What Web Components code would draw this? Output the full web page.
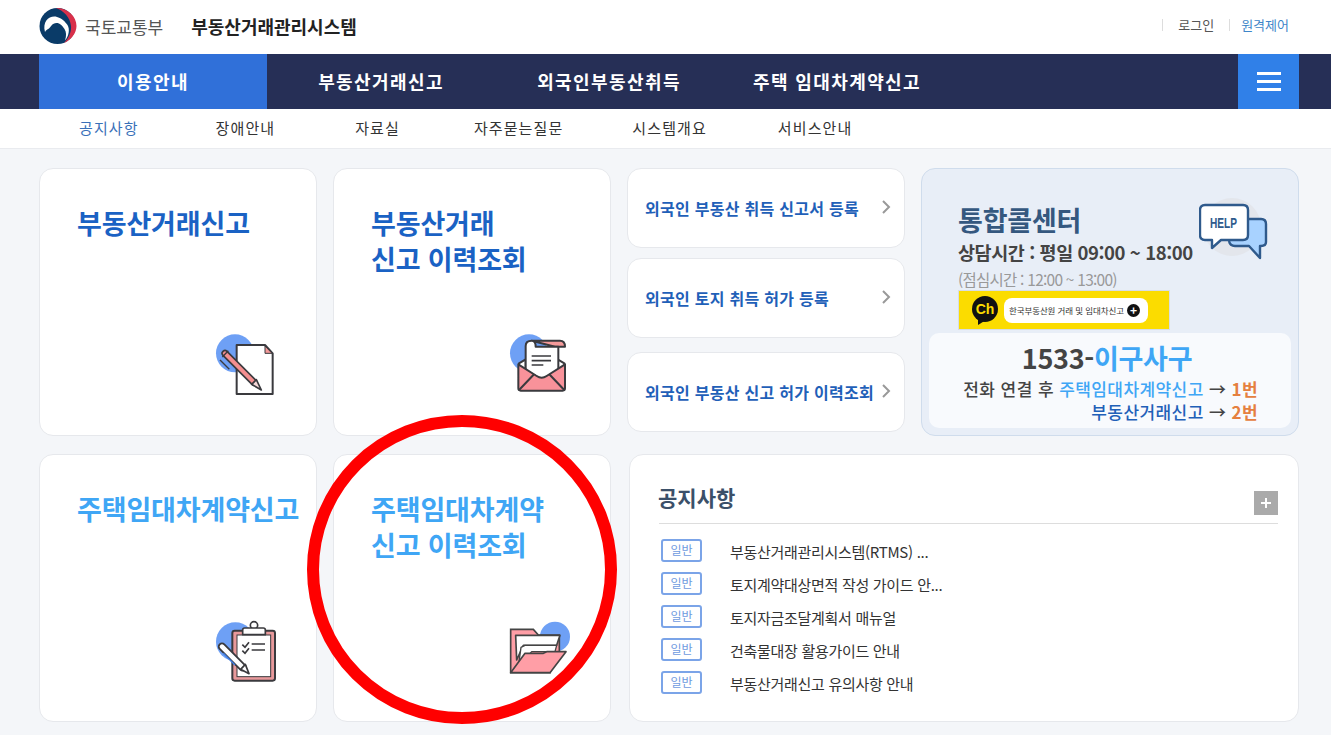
<!DOCTYPE html>
<html lang="ko">
<head>
<meta charset="utf-8">
<title>부동산거래관리시스템</title>
<style>
  html, body { margin: 0; height: 735px; overflow: hidden; }
  body {
    background: #f4f6f9;
    font-family: "Noto Sans CJK KR", "Noto Sans", sans-serif;
    color: #333;
    position: relative;
  }
</style>
</head>
<body>
<site-header></site-header>
<main-nav></main-nav>
<sub-nav></sub-nav>
<dash-board></dash-board>
<ring-mark></ring-mark>

<script>
const headerTpl = document.createElement("template");
headerTpl.innerHTML = `
  <style>
    :host { display: flex; align-items: center; height: 54px; padding: 0 42px 0 39px; background: #fff; }
    svg { width: 38px; height: 36px; margin-top: -2px; }
    .org { margin-left: 8px; font-size: 17px; color: #555; margin-top: -2px; }
    .sys { margin-left: 28px; font-size: 18px; font-weight: 700; color: #222; margin-top: -2px; }
    .util { margin-left: auto; display: flex; align-items: center; font-size: 13px; margin-top: -4px; }
    .util span { line-height: 12px; border-left: 1px solid #ddd; }
    .login { padding-left: 15px; color: #555; }
    .remote { margin-left: 15px; padding-left: 11px; color: #3e86c9; }
  </style>
  <svg viewBox="0 0 38 36" aria-hidden="true">
    <circle cx="18.5" cy="18" r="18" fill="#0a3b68"/>
    <path d="M17 0C28 -.5 37.5 8 37.5 18C37.5 25 32 32 25 35C30 30 32.5 24 32 18C31 9 25 3 17 0Z" fill="#d8304a"/>
    <path d="M6 24C3 13 11 7 18 9C24 10.5 26 14 28.5 17C31 21 30 28 26 32.5C27.5 28 27.5 24 25.5 21C23 17.5 21 15 17.5 15C13 15 12 19 10 20.5C8 21.5 7 22 6 24Z" fill="#fff"/>
  </svg>
  <span class="org">국토교통부</span>
  <span class="sys">부동산거래관리시스템</span>
  <div class="util">
    <span class="login">로그인</span>
    <span class="remote">원격제어</span>
  </div>
`;
class SiteHeader extends HTMLElement {
  constructor() {
    super();
    this.attachShadow({ mode: "open" });
    this.shadowRoot.appendChild(headerTpl.content.cloneNode(true));
  }
}
customElements.define("site-header", SiteHeader);

const navTpl = document.createElement("template");
navTpl.innerHTML = `
  <style>
    :host { display: flex; height: 55px; padding: 0 32px 0 39px; background: #262f56; }
    a { width: 228px; display: flex; align-items: center; justify-content: center; color: #fff; font-size: 18px; font-weight: 700; letter-spacing: 1.4px; padding-bottom: 1px; box-sizing: border-box; }
    a.on { background: #3070d9; }
    button { margin-left: auto; width: 61px; border: 0; padding: 0; background: #3080e8; display: flex; flex-direction: column; align-items: center; justify-content: center; gap: 5px; }
    button i { display: block; width: 24px; height: 3px; background: #fff; }
  </style>
  <a class="on">이용안내</a>
  <a>부동산거래신고</a>
  <a>외국인부동산취득</a>
  <a>주택 임대차계약신고</a>
  <button aria-label="menu"><i></i><i></i><i></i></button>
`;
class MainNav extends HTMLElement {
  constructor() {
    super();
    this.attachShadow({ mode: "open" });
    this.shadowRoot.appendChild(navTpl.content.cloneNode(true));
  }
}
customElements.define("main-nav", MainNav);

const subTpl = document.createElement("template");
subTpl.innerHTML = `
  <style>
    :host { display: flex; align-items: center; height: 39px; padding: 0 0 0 79px; background: #fff; border-bottom: 1px solid #e9ebef; font-size: 15px; letter-spacing: 1.1px; color: #333; }
    span { padding-bottom: 3px; }
    .on { color: #3a70b8; }
  </style>
  <span class="on">공지사항</span>
  <span style="margin-left:77px">장애안내</span>
  <span style="margin-left:80px">자료실</span>
  <span style="margin-left:74px">자주묻는질문</span>
  <span style="margin-left:69px">시스템개요</span>
  <span style="margin-left:71px">서비스안내</span>
`;
class SubNav extends HTMLElement {
  constructor() {
    super();
    this.attachShadow({ mode: "open" });
    this.shadowRoot.appendChild(subTpl.content.cloneNode(true));
  }
}
customElements.define("sub-nav", SubNav);

const tileTpl = document.createElement("template");
tileTpl.innerHTML = `
  <style>
    :host { display: flex; flex-direction: column; box-sizing: border-box; width: 278px; height: 268px; padding: 36px 0 26px 37px; background: #fff; border: 1px solid #e6e8ec; border-radius: 14px; }
    .title { font-size: 27px; font-weight: 700; line-height: 36px; letter-spacing: -0.15px; color: var(--tile-color, #1a62c4); white-space: nowrap; }
    .icon { margin-top: auto; align-self: flex-end; height: 85px; padding-right: 26px; }
    ::slotted(svg) { display: block; width: 90px; height: 85px; }
  </style>
  <div class="title"><slot></slot></div>
  <div class="icon"><slot name="icon"></slot></div>
`;
class TileCard extends HTMLElement {
  constructor() {
    super();
    this.attachShadow({ mode: "open" });
    this.shadowRoot.appendChild(tileTpl.content.cloneNode(true));
  }
}
customElements.define("tile-card", TileCard);

const linkTpl = document.createElement("template");
linkTpl.innerHTML = `
  <style>
    :host { display: flex; align-items: center; box-sizing: border-box; width: 278px; height: 80px; padding: 0 13px 0 17px; background: #fff; border: 1px solid #e6e8ec; border-radius: 14px; font-size: 16px; font-weight: 700; letter-spacing: 0.28px; color: #1f60b8; white-space: nowrap; }
    svg { margin-left: auto; width: 10px; height: 16px; margin-top: -3px; flex: none; }
  </style>
  <slot></slot>
  <svg viewBox="0 0 10 16"><path d="M2 2l6 6-6 6" fill="none" stroke="#999" stroke-width="2"/></svg>
`;
class LinkCard extends HTMLElement {
  constructor() {
    super();
    this.attachShadow({ mode: "open" });
    this.shadowRoot.appendChild(linkTpl.content.cloneNode(true));
  }
}
customElements.define("link-card", LinkCard);

const callTpl = document.createElement("template");
callTpl.innerHTML = `
  <style>
    :host { display: block; position: relative; box-sizing: border-box; width: 378px; height: 268px; padding: 33px 7px 7px 7px; background: #e8eef7; border: 1px solid #cfdcec; border-radius: 14px; }
    .head { padding-left: 29px; }
    .t { font-size: 27px; font-weight: 700; line-height: 36px; letter-spacing: -0.2px; color: #35587f; }
    .h { font-size: 18.5px; font-weight: 700; line-height: 26px; letter-spacing: -0.42px; color: #444; margin-top: 1px; }
    .l { font-size: 15.5px; line-height: 22px; letter-spacing: -0.75px; color: #999; margin-top: 3px; }
    .help { position: absolute; left: 277px; top: 26px; width: 82px; height: 76px; }
    .kakao { display: flex; align-items: center; box-sizing: border-box; width: 210px; height: 38px; margin: 1px 0 0 30px; padding: 0 0 0 11px; background: #fbdc00; box-shadow: 0 0 0 1px rgba(0,0,0,.07); }
    .kakao svg { width: 30px; height: 30px; flex: none; margin-top: 2px; }
    .pill { display: flex; align-items: center; margin-left: 4px; width: 144px; height: 25px; box-sizing: border-box; padding: 0 8px 0 5px; background: #fff; border-radius: 8px; font-size: 8.5px; letter-spacing: -0.1px; color: #333; white-space: nowrap; }
    .plus { margin-left: auto; width: 13px; height: 13px; border-radius: 50%; background: #111; color: #fff; font-size: 12px; line-height: 12px; text-align: center; font-weight: 700; letter-spacing: 0; }
    .box { box-sizing: border-box; height: 95px; margin-top: 4px; padding: 6px 33px 0 0; background: #f8fafd; border-radius: 10px; text-align: right; font-size: 17px; line-height: 23px; font-weight: 500; letter-spacing: 0.42px; color: #444; white-space: nowrap; }
    .num { display: block; text-align: center; margin: 0 -27px 0 0; font-size: 27px; line-height: 38px; font-weight: 700; letter-spacing: -0.3px; }
    .sky { color: #3fa6f5; }
    .blue { color: #1f60b8; }
    .or { color: #e5803f; font-weight: 700; }
  </style>
  <svg class="help" viewBox="0 0 82 76" aria-hidden="true">
    <circle cx="33" cy="32" r="29" fill="#e3e6ec"/>
    <path d="M40 24H62Q67 24 67 29V47Q67 51 62 51H61V63L50 51H36Q31 51 30 46" fill="#a8d2ff" stroke="#2f5a8c" stroke-width="2.4" stroke-linejoin="round"/>
    <path d="M6 10H44Q49 10 49 15V40Q49 45 44 45H22L13 53V45H6Q1 45 1 40V15Q1 10 6 10Z" fill="#fff" stroke="#2f5a8c" stroke-width="2.4" stroke-linejoin="round"/>
    <text x="11" y="33" font-family="'Liberation Sans', sans-serif" font-weight="700" font-size="15" textLength="27" lengthAdjust="spacingAndGlyphs" fill="#2f5a8c">HELP</text>
  </svg>
  <div class="head">
    <div class="t">통합콜센터</div>
    <div class="h">상담시간 : 평일 09:00 ~ 18:00</div>
    <div class="l">(점심시간 : 12:00 ~ 13:00)</div>
  </div>
  <div class="kakao">
    <svg viewBox="0 0 30 30" aria-hidden="true">
      <circle cx="15" cy="13" r="13" fill="#111"/>
      <path d="M8 22L8 29L16 24Z" fill="#111"/>
      <text x="15" y="18" text-anchor="middle" font-family="'Liberation Sans', sans-serif" font-weight="700" font-size="14" fill="#fbdc00">Ch</text>
    </svg>
    <div class="pill">한국부동산원 거래 및 임대차신고<span class="plus">+</span></div>
  </div>
  <div class="box">
    <span class="num">1533-<span class="sky">이구사구</span></span>
    전화 연결 후 <span class="sky">주택임대차계약신고</span> → <span class="or">1번</span><br>
    <span class="blue">부동산거래신고</span> → <span class="or">2번</span>
  </div>
`;
class CallCenter extends HTMLElement {
  constructor() {
    super();
    this.attachShadow({ mode: "open" });
    this.shadowRoot.appendChild(callTpl.content.cloneNode(true));
  }
}
customElements.define("call-center", CallCenter);

const noticeTpl = document.createElement("template");
noticeTpl.innerHTML = `
  <style>
    :host { display: block; box-sizing: border-box; flex: 1; height: 268px; padding: 23px 20px 0 29px; background: #fff; border: 1px solid #e6e8ec; border-radius: 14px; }
    .top { display: flex; align-items: center; justify-content: space-between; height: 45px; border-bottom: 1px solid #ddd; box-sizing: content-box; }
    h2 { margin: 0 0 7px -1px; font-size: 21px; font-weight: 700; color: #3b5069; }
    .more { width: 24px; height: 24px; margin-top: 4px; background: #aaa; position: relative; }
    .more::before, .more::after { content: ""; position: absolute; background: #fff; }
    .more::before { left: 7px; top: 11px; width: 10px; height: 2px; }
    .more::after { left: 11px; top: 7px; width: 2px; height: 10px; }
    ul { list-style: none; margin: 15px 0 0; padding: 0 0 0 2px; display: flex; flex-direction: column; gap: 10px; }
  </style>
  <div class="top"><h2>공지사항</h2><div class="more"></div></div>
  <ul><slot></slot></ul>
`;
class NoticeBoard extends HTMLElement {
  constructor() {
    super();
    this.attachShadow({ mode: "open" });
    this.shadowRoot.appendChild(noticeTpl.content.cloneNode(true));
  }
}
customElements.define("notice-board", NoticeBoard);

const rowTpl = document.createElement("template");
rowTpl.innerHTML = `
  <style>
    :host { display: flex; align-items: center; height: 23px; font-size: 15px; letter-spacing: -0.3px; color: #333; white-space: nowrap; }
    b { box-sizing: border-box; width: 41px; height: 23px; margin-right: 28px; display: flex; align-items: center; justify-content: center; border: 2px solid #7ba4e8; border-radius: 3px; font-size: 12px; font-weight: 400; letter-spacing: 0; color: #6f9be0; }
    b span { margin-top: -2px; }
    .text { margin-top: 1px; }
  </style>
  <b><span>일반</span></b><span class="text"><slot></slot></span>
`;
class NoticeRow extends HTMLElement {
  constructor() {
    super();
    this.attachShadow({ mode: "open" });
    this.shadowRoot.appendChild(rowTpl.content.cloneNode(true));
  }
}
customElements.define("notice-row", NoticeRow);

const ink = `fill="none" stroke="#3a3a3e" stroke-width="6" stroke-linejoin="round" stroke-linecap="round"`;
const boardTpl = document.createElement("template");
boardTpl.innerHTML = `
  <style>
    :host { display: flex; flex-direction: column; gap: 18px; padding: 19px 32px 0 39px; }
    .row { display: flex; gap: 16px; }
    .stack { display: flex; flex-direction: column; gap: 10px; }
    .stack link-card:last-child { margin-top: 4px; }
    notice-board { margin-left: 2px; }
    .sky { --tile-color: #3fa6f5; }
  </style>
  <div class="row">
    <tile-card>부동산거래신고
      <svg slot="icon" viewBox="0 12 270 255" aria-hidden="true">
        <circle cx="105" cy="100" r="57" fill="#6ea0f5"/>
        <path d="M110 75H195L218 100V222H110Z" fill="#fff" stroke="#3a3a3e" stroke-width="6" stroke-linejoin="round"/>
        <path d="M195 78V100H216Z" fill="#f59a9a" stroke="#3a3a3e" stroke-width="3"/>
        <path d="M60 120L88 148" fill="none" stroke="#3a3a3e" stroke-width="4"/>
        <path d="M75 100L162 187" stroke="#3a3a3e" stroke-width="22" stroke-linecap="round"/>
        <path d="M75 100L162 187" stroke="#f58f90" stroke-width="12" stroke-linecap="round"/>
        <path d="M155 193L169 179L184 210Z" fill="#f5d8d8" stroke="#3a3a3e" stroke-width="5" stroke-linejoin="round"/>
        <path d="M67 111L85 92" stroke="#3a3a3e" stroke-width="4"/>
      </svg>
    </tile-card>
    <tile-card>부동산거래<br>신고 이력조회
      <svg slot="icon" viewBox="-3 12 270 255" aria-hidden="true">
        <circle cx="102" cy="100" r="57" fill="#6ea0f5"/>
        <path d="M110 62H195Q210 62 210 80H180Z" fill="#f59a9a" stroke="#3a3a3e" stroke-width="6" stroke-linejoin="round"/>
        <path d="M72 130L92 118V190H72Z" fill="#fff" stroke="#3a3a3e" stroke-width="6" stroke-linejoin="round"/>
        <path d="M208 130L188 118V190H208Z" fill="#fff" stroke="#3a3a3e" stroke-width="6" stroke-linejoin="round"/>
        <path d="M92 150V78Q92 62 110 62Q122 62 122 80H190V150L140 178Z" fill="#fff" stroke="#3a3a3e" stroke-width="6" stroke-linejoin="round"/>
        <path d="M110 108H168M110 122H168M110 135H145" fill="none" stroke="#3a3a3e" stroke-width="5"/>
        <path d="M70 133L125 168Q140 178 155 168L210 133V205Q210 212 203 212H77Q70 212 70 205Z" fill="#f8929a" stroke="#3a3a3e" stroke-width="6" stroke-linejoin="round"/>
        <path d="M75 207L115 165M205 207L165 165" ${ink}/>
      </svg>
    </tile-card>
    <div class="stack">
      <link-card>외국인 부동산 취득 신고서 등록</link-card>
      <link-card>외국인 토지 취득 허가 등록</link-card>
      <link-card>외국인 부동산 신고 허가 이력조회</link-card>
    </div>
    <call-center></call-center>
  </div>
  <div class="row">
    <tile-card class="sky">주택임대차계약신고
      <svg slot="icon" viewBox="0 0 270 255" aria-hidden="true">
        <circle cx="106" cy="95" r="58" fill="#6ea0f5"/>
        <rect x="97" y="62" width="128" height="150" rx="7" fill="#e8999b" stroke="#3a3a3e" stroke-width="6"/>
        <rect x="111" y="75" width="101" height="125" fill="#fff" stroke="#3a3a3e" stroke-width="3"/>
        <circle cx="162" cy="46" r="11" fill="#fff" stroke="#3a3a3e" stroke-width="5"/>
        <path d="M128 74V60Q128 54 134 54H190Q196 54 196 60V74Z" fill="#fff" stroke="#3a3a3e" stroke-width="5" stroke-linejoin="round"/>
        <path d="M127 104L135 112L147 97M127 122L135 130L147 115" fill="none" stroke="#3a3a3e" stroke-width="5"/>
        <path d="M155 102H195M155 120H195" fill="none" stroke="#3a3a3e" stroke-width="5"/>
        <path d="M66 110L128 172" stroke="#3a3a3e" stroke-width="25" stroke-linecap="round"/>
        <path d="M66 110L128 172" stroke="#fff" stroke-width="14" stroke-linecap="round"/>
        <path d="M70 130L105 165" stroke="#3f7fe8" stroke-width="4"/>
        <path d="M122 178L136 163L147 191Z" fill="#fff" stroke="#3a3a3e" stroke-width="5" stroke-linejoin="round"/>
      </svg>
    </tile-card>
    <tile-card class="sky">주택임대차계약<br>신고 이력조회
      <svg slot="icon" viewBox="-3 0 270 255" aria-hidden="true">
        <circle cx="180" cy="80" r="45" fill="#6ea0f5"/>
        <path d="M47 58H115L130 75H193V130H160L165 188H47Z" fill="#ff9ea6" stroke="#444" stroke-width="5" stroke-linejoin="miter"/>
        <path d="M62 76H195L185 106H85L65 150Z" fill="#fff" stroke="#444" stroke-width="5" stroke-linejoin="round"/>
        <path d="M78 112L90 106H185L180 125H110L70 170Z" fill="#fff" stroke="#444" stroke-width="4" stroke-linejoin="round"/>
        <path d="M47 188L90 130H145L155 125H213L165 188Z" fill="#ff9ea6" stroke="#444" stroke-width="5" stroke-linejoin="round"/>
      </svg>
    </tile-card>
    <notice-board>
      <notice-row>부동산거래관리시스템(RTMS) ...</notice-row>
      <notice-row>토지계약대상면적 작성 가이드 안...</notice-row>
      <notice-row>토지자금조달계획서 매뉴얼</notice-row>
      <notice-row>건축물대장 활용가이드 안내</notice-row>
      <notice-row>부동산거래신고 유의사항 안내</notice-row>
    </notice-board>
  </div>
`;
class DashBoard extends HTMLElement {
  constructor() {
    super();
    this.attachShadow({ mode: "open" });
    this.shadowRoot.appendChild(boardTpl.content.cloneNode(true));
  }
}
customElements.define("dash-board", DashBoard);

// red circle lying over the page
class RingMark extends HTMLElement {
  constructor() {
    super();
    this.attachShadow({ mode: "open" });
    this.shadowRoot.innerHTML = `
      <style>
        :host { position: absolute; left: 300px; top: 408px; width: 324px; height: 324px; pointer-events: none; }
        svg { display: block; width: 100%; height: 100%; }
      </style>
      <svg viewBox="0 0 324 324"><ellipse cx="162" cy="161.5" rx="149" ry="148.5" fill="none" stroke="#ff0000" stroke-width="12"/></svg>`;
  }
}
customElements.define("ring-mark", RingMark);
</script>
</body>
</html>
